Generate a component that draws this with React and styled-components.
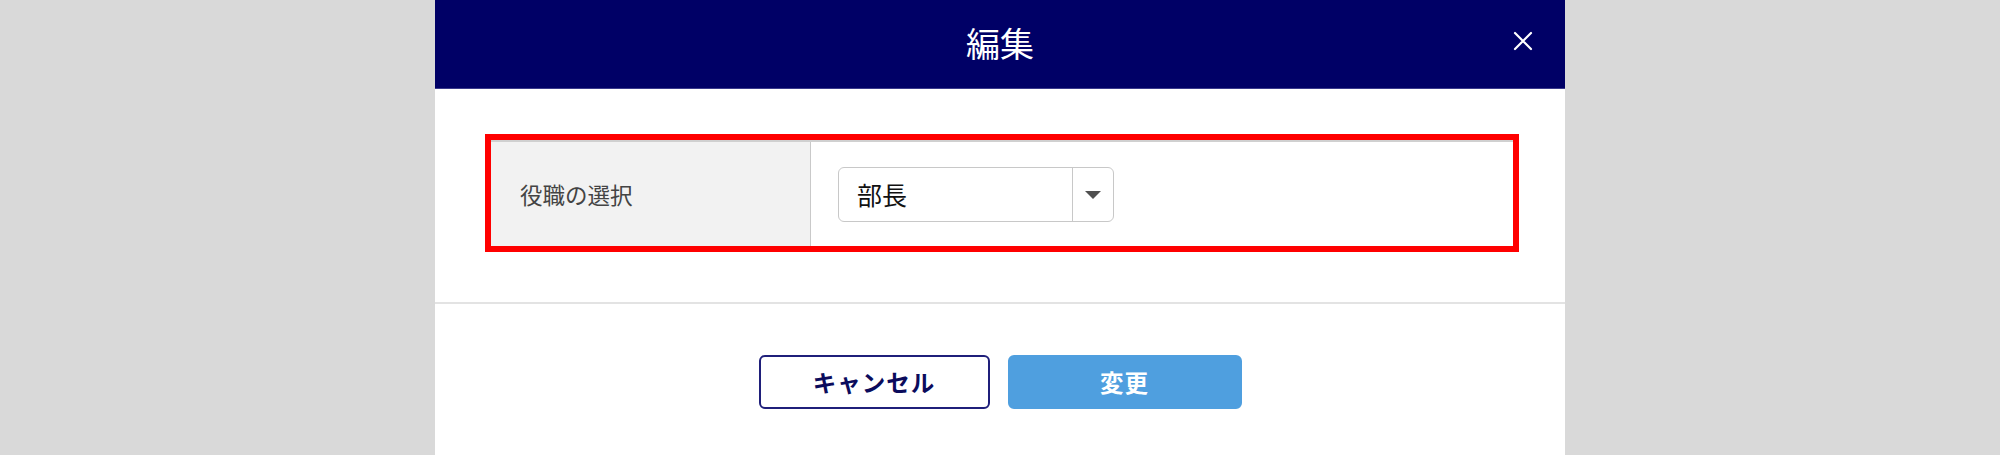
import React from "react";
import styled, { createGlobalStyle } from "styled-components";

const Global = createGlobalStyle`
  html, body { margin: 0; padding: 0; }
  body {
    background: #d9d9d9;
    font-family: "Noto Sans CJK JP", "Noto Sans", sans-serif;
    overflow: hidden;
  }
`;

const Modal = styled.div`
  width: 1130px;
  margin: 0 auto;
  background: #ffffff;
  min-height: 470px;
`;

const Header = styled.div`
  position: relative;
  height: 88px;
  background: #000066;
  border-bottom: 1px solid #3a3a8c;
  display: flex;
  align-items: center;
  justify-content: center;
`;

const Title = styled.h1`
  margin: 0;
  color: #ffffff;
  font-size: 34px;
  font-weight: 400;
  line-height: 1;
  padding-bottom: 2px;
`;

const CloseButton = styled.button`
  position: absolute;
  right: 32px;
  top: 31px;
  width: 20px;
  height: 20px;
  padding: 0;
  border: none;
  background: transparent;
  cursor: pointer;
  display: flex;
`;

const Body = styled.div`
  padding: 45px 46px 50px 50px;
  border-bottom: 2px solid #e3e3e3;
`;

const Highlight = styled.div`
  border: 6px solid #ff0000;
`;

const Row = styled.div`
  display: flex;
  border-top: 2px solid #d0d0d0;
  height: 104px;
`;

const LabelCell = styled.div`
  width: 320px;
  background: #f2f2f2;
  border-right: 1px solid #c9c9c9;
  display: flex;
  align-items: center;
  padding-left: 29px;
  box-sizing: border-box;
  font-size: 22.5px;
  color: #444444;
`;

const ValueCell = styled.div`
  flex: 1;
  display: flex;
  align-items: center;
  padding-left: 27px;
`;

const Select = styled.div`
  width: 276px;
  height: 55px;
  box-sizing: border-box;
  border: 1px solid #c8c8c8;
  border-radius: 6px;
  display: flex;
  align-items: stretch;
  background: #fff;
`;

const SelectValue = styled.div`
  flex: 1;
  display: flex;
  align-items: center;
  padding-left: 18px;
  font-size: 25px;
  color: #111111;
`;

const SelectArrow = styled.div`
  width: 40px;
  border-left: 1px solid #c8c8c8;
  display: flex;
  align-items: center;
  justify-content: center;
`;

const Triangle = styled.span`
  width: 0;
  height: 0;
  border-left: 8px solid transparent;
  border-right: 8px solid transparent;
  border-top: 8px solid #505050;
  margin-top: 1px;
`;

const Footer = styled.div`
  display: flex;
  justify-content: center;
  gap: 18px;
  padding: 51px 0 50px;
`;

const Button = styled.button`
  width: ${(p) => p.$w}px;
  height: 54px;
  box-sizing: border-box;
  border-radius: 6px;
  font-family: "Noto Sans CJK JP", "Noto Sans", sans-serif;
  font-size: 23.5px;
  font-weight: 700;
  cursor: pointer;
  border: 2px solid ${(p) => (p.$primary ? "#4f9fdf" : "#1f1f7a")};
  background: ${(p) => (p.$primary ? "#4f9fdf" : "#ffffff")};
  color: ${(p) => (p.$primary ? "#ffffff" : "#0b0b5c")};
  letter-spacing: 1px;
`;

export default function App() {
  return (
    <>
      <Global />
      <Modal>
        <Header>
          <Title>編集</Title>
          <CloseButton aria-label="close">
            <svg width="20" height="20" viewBox="0 0 20 20">
              <path d="M2 2 L18 18 M18 2 L2 18" stroke="#ffffff" strokeWidth="2.2" strokeLinecap="round" />
            </svg>
          </CloseButton>
        </Header>
        <Body>
          <Highlight>
            <Row>
              <LabelCell>役職の選択</LabelCell>
              <ValueCell>
                <Select>
                  <SelectValue>部長</SelectValue>
                  <SelectArrow>
                    <Triangle />
                  </SelectArrow>
                </Select>
              </ValueCell>
            </Row>
          </Highlight>
        </Body>
        <Footer>
          <Button $w={231}>キャンセル</Button>
          <Button $w={234} $primary>変更</Button>
        </Footer>
      </Modal>
    </>
  );
}
